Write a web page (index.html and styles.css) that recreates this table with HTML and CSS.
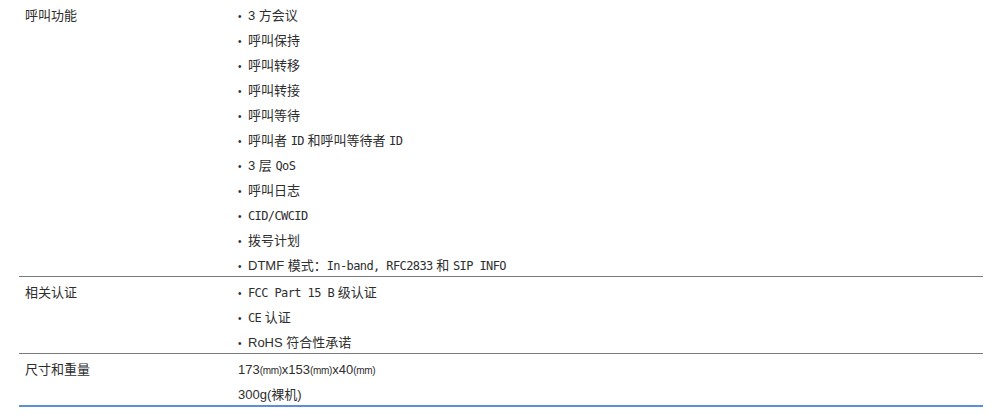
FILE: index.html
```html
<!DOCTYPE html>
<html lang="zh-CN">
<head>
<meta charset="utf-8">
<title>规格</title>
<link rel="stylesheet" href="styles.css">
</head>
<body>
<div class="spec">
  <div class="row">
    <div class="label">呼叫功能</div>
    <ul class="items">
      <li class="bullet">3 方会议</li>
      <li class="bullet">呼叫保持</li>
      <li class="bullet">呼叫转移</li>
      <li class="bullet">呼叫转接</li>
      <li class="bullet">呼叫等待</li>
      <li class="bullet">呼叫者 <span class="m">ID</span> 和呼叫等待者 <span class="m">ID</span></li>
      <li class="bullet">3 层 <span class="m">QoS</span></li>
      <li class="bullet">呼叫日志</li>
      <li class="bullet"><span class="m">CID/CWCID</span></li>
      <li class="bullet">拨号计划</li>
      <li class="bullet">DTMF 模式：<span class="m">In-band, RFC2833</span> 和 <span class="m">SIP INFO</span></li>
    </ul>
  </div>
  <div class="row">
    <div class="label">相关认证</div>
    <ul class="items">
      <li class="bullet"><span class="m">FCC Part 15 B</span> 级认证</li>
      <li class="bullet"><span class="m">CE</span> 认证</li>
      <li class="bullet">RoHS 符合性承诺</li>
    </ul>
  </div>
  <div class="row row-last">
    <div class="label">尺寸和重量</div>
    <ul class="items">
      <li>173<span class="s">(mm)</span>x153<span class="s">(mm)</span>x40<span class="s">(mm)</span></li>
      <li>300g(裸机)</li>
    </ul>
  </div>
</div>
</body>
</html>
```
FILE: styles.css
```css
html, body {
  margin: 0;
  padding: 0;
  background: #ffffff;
}
body {
  font-family: "Liberation Sans", "Noto Sans CJK SC", sans-serif;
  font-size: 13px;
  color: #2e2e2e;
}
.spec {
  margin-left: 19px;
  width: 964px;
}
.row {
  display: flex;
  padding-top: 6px;
  border-bottom: 1px solid #7a7a7a;
}
.row-last {
  border-bottom: 2px solid #5b8fd8;
}
.label {
  width: 213px;
  padding-left: 6px;
  line-height: 20px;
  flex: none;
}
.items {
  list-style: none;
  margin: 0;
  padding: 0;
  display: flex;
  flex-direction: column;
  gap: 5px;
}
.items li {
  line-height: 20px;
  height: 20px;
  white-space: nowrap;
}
.bullet::before {
  content: "•";
  display: inline-block;
  width: 10px;
  font-size: 10px;
}
.m {
  font-family: "DejaVu Sans Mono", "Noto Sans CJK SC", monospace;
  font-size: 12px;
  letter-spacing: -0.6px;
}
.s {
  font-size: 10px;
  letter-spacing: -0.3px;
}
```
